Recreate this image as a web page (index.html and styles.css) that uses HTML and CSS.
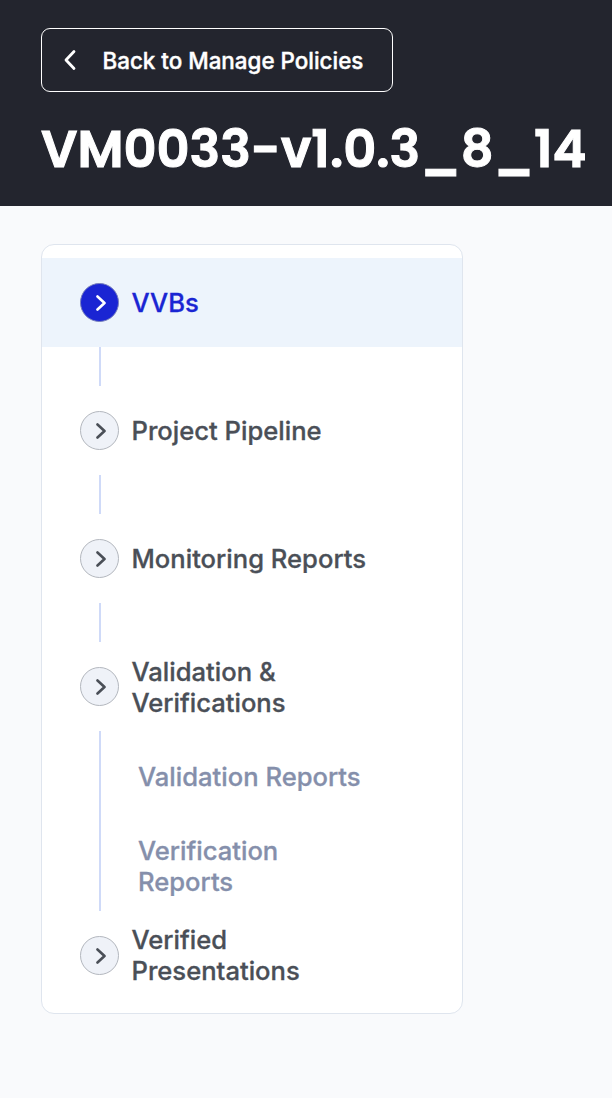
FILE: index.html
```html
<!DOCTYPE html>
<html lang="en">
<head>
<meta charset="utf-8">
<title>VM0033-v1.0.3_8_14</title>
<link rel="stylesheet" href="styles.css">
</head>
<body>
<header class="header">
  <button class="back"><svg class="back-icon" viewBox="0 0 14 22"><path d="M11 2.500 3 11l8 8.500"/></svg><span>Back to Manage Policies</span></button>
  <h1 class="title">VM0033-v1.0.3_8_14</h1>
</header>
<main class="content">
  <nav class="steps">
    <a class="step active"><span class="dot"><svg viewBox="0 0 10 16"><path d="m1.500 1.500 7 6.500-7 6.500"/></svg></span><span>VVBs</span></a>
    <div class="line"></div>
    <a class="step"><span class="dot"><svg viewBox="0 0 10 16"><path d="m1.500 1.500 7 6.500-7 6.500"/></svg></span><span>Project Pipeline</span></a>
    <div class="line"></div>
    <a class="step"><span class="dot"><svg viewBox="0 0 10 16"><path d="m1.500 1.500 7 6.500-7 6.500"/></svg></span><span>Monitoring Reports</span></a>
    <div class="line"></div>
    <a class="step"><span class="dot"><svg viewBox="0 0 10 16"><path d="m1.500 1.500 7 6.500-7 6.500"/></svg></span><span>Validation &amp;<br>Verifications</span></a>
    <div class="substeps"><a>Validation Reports</a><a>Verification<br>Reports</a></div>
    <a class="step"><span class="dot"><svg viewBox="0 0 10 16"><path d="m1.500 1.500 7 6.500-7 6.500"/></svg></span><span class="last-label">Verified<br>Presentations</span></a>
  </nav>
</main>
</body>
</html>
```
FILE: styles.css
```css
* { box-sizing: border-box; }
body { margin: 0; min-height: 1098px; background: #f9fafc; font-family: Inter, sans-serif; }
.header { height: 206px; padding: 28px 0 0 41px; background: #23252e; color: #fff; }
.back { display: flex; align-items: center; width: 352px; height: 64px; padding: 0 0 0 21px; gap: 25.500px; border: 1px solid #fff; border-radius: 9px; background: transparent; color: #fff; font: 500 22.400px Inter, sans-serif; white-space: nowrap; -webkit-text-stroke: 0.400px; }
.back-icon { width: 14px; height: 22px; fill: none; stroke: currentColor; stroke-width: 2.800; stroke-linecap: round; stroke-linejoin: round; }
.title { margin: 18px 0 0; font: 600 51.200px/78px Poppins, Inter, sans-serif; white-space: nowrap; -webkit-text-stroke: 1px; }
.content { padding: 38px 41px; }
.steps { width: 422px; height: 770px; padding-top: 13px; border: 1px solid #dfe5ee; border-radius: 13px; background: #fff; font-size: 25.600px; line-height: 31px; font-weight: 500; color: #4a4f57; -webkit-text-stroke: 0.300px; }
.step { display: flex; align-items: center; height: 89px; padding-left: 38px; gap: 12.500px; }
.dot { display: flex; align-items: center; justify-content: center; width: 39px; height: 39px; border: 1px solid #b3b7be; border-radius: 50%; background: #eff2f8; padding-left: 2px; }
.dot svg { width: 10px; height: 16px; fill: none; stroke: currentColor; stroke-width: 2.600; stroke-linecap: round; stroke-linejoin: round; }
.active { background: #edf4fc; color: #1a25d3; }
.active .dot { background: #1a25d3; color: #fff; border-color: #777fbd; }
.line { width: 2px; height: 39px; margin-left: 57px; background: #cfdaf8; }
.substeps { display: flex; flex-direction: column; gap: 43px; height: 180px; margin-left: 57px; padding: 30px 0 0 37px; border-left: 2px solid #cfdaf8; color: #858fab; }
.last-label { padding-bottom: 2px; }
```
